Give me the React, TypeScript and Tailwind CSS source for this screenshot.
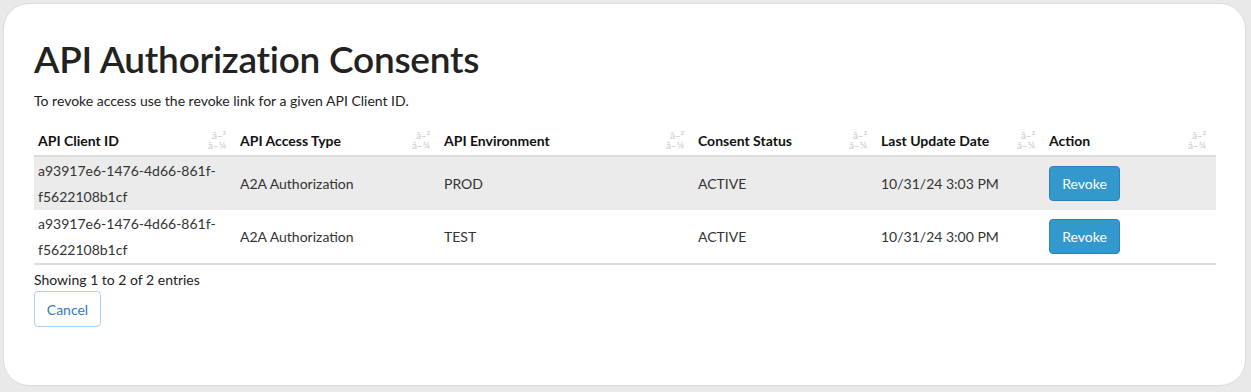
const rows = [
  { id: "a93917e6-1476-4d66-861f-f5622108b1cf", type: "A2A Authorization", env: "PROD", status: "ACTIVE", date: "10/31/24 3:03 PM" },
  { id: "a93917e6-1476-4d66-861f-f5622108b1cf", type: "A2A Authorization", env: "TEST", status: "ACTIVE", date: "10/31/24 3:00 PM" },
];

const cols = [
  { label: "API Client ID", w: "w-[202px]" },
  { label: "API Access Type", w: "w-[204px]" },
  { label: "API Environment", w: "w-[254px]" },
  { label: "Consent Status", w: "w-[183px]" },
  { label: "Last Update Date", w: "w-[168px]" },
  { label: "Action", w: "w-[171px]" },
];

const SortIcon = () => (
  <span className="absolute right-[10px] top-[4px] flex flex-col items-end text-[10px] font-normal leading-[10px] text-[#c8c8c8]">
    <span>â–²</span>
    <span>â–¼</span>
  </span>
);

export default function App() {
  return (
    <div className="h-[392px] w-[1251px] bg-[#e9e9e9] p-[3px] pr-[5px] pb-[6px] font-['Lato',sans-serif] text-[#222]">
      <div className="h-full rounded-[26px] border border-[#dcdcdc] bg-white pl-[30px] pr-[29px] pt-[33px]">
        <h1 className="text-[37px] font-semibold leading-[44px] tracking-[-0.25px] text-[#222]">API Authorization Consents</h1>
        <p className="mt-[11px] text-[14px] leading-[18px] text-[#222]">To revoke access use the revoke link for a given API Client ID.</p>
        <table className="mt-[16px] w-[1182px] table-fixed border-collapse text-[14px]">
          <thead>
            <tr className="border-b-2 border-[#dddddd]">
              {cols.map((c) => (
                <th key={c.label} className={`${c.w} relative h-[30px] pl-[4px] text-left font-bold text-[#111]`}>
                  {c.label}
                  <SortIcon />
                </th>
              ))}
            </tr>
          </thead>
          <tbody>
            {rows.map((r, i) => (
              <tr key={i} className={i === 0 ? "bg-[#ebebeb]" : "border-b-2 border-[#dddddd] bg-white"}>
                <td className="h-[54px] pl-[4px] pr-[8px] leading-[26px] text-[#333]">{r.id}</td>
                <td className="pl-[4px] text-[#333]">{r.type}</td>
                <td className="pl-[4px] text-[#333]">{r.env}</td>
                <td className="pl-[4px] text-[#333]">{r.status}</td>
                <td className="pl-[4px] text-[#333]">{r.date}</td>
                <td className="pl-[4px]">
                  <button className="h-[35px] w-[71px] rounded-[4px] border border-[#2b7fc0] bg-[#3399cc] text-[14px] text-white">Revoke</button>
                </td>
              </tr>
            ))}
          </tbody>
        </table>
        <p className="mt-[6px] text-[14px] leading-[18px] text-[#222]">Showing 1 to 2 of 2 entries</p>
        <button className="mt-[2px] h-[36px] w-[67px] rounded-[4px] border border-[#a9d3f3] bg-white text-[14px] text-[#2f7ac2]">Cancel</button>
      </div>
    </div>
  );
}
